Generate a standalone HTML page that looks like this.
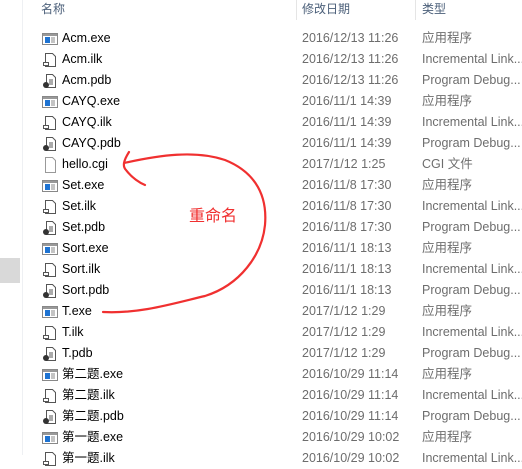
<!DOCTYPE html>
<html><head><meta charset="utf-8"><style>
body{margin:0;width:522px;height:455px;overflow:hidden;background:#fff;font-family:"Liberation Sans","Noto Sans CJK SC",sans-serif;position:relative}
.l{position:absolute;left:22px;top:0;width:1px;height:455px;background:#eef0f3}
.g{position:absolute;left:0;top:258px;width:20px;height:25px;background:#d9d9d9}
.h{position:absolute;top:0;font-size:12px;color:#4c607a}
.sep{position:absolute;top:0;width:1px;height:20px;background:#e5e5e5}
.r{position:absolute;left:0;width:522px;height:21px;font-size:12.5px;line-height:21px;color:#000}
.n{position:absolute;left:62px}
.d{position:absolute;left:302px;color:#6d6d6d}
.t{position:absolute;left:422px;color:#6d6d6d;white-space:nowrap}
.ic{position:absolute;left:42px;top:3px}
</style></head><body>
<div class="l"></div><div class="g"></div>
<div class="h" style="left:41px">名称</div>
<div class="sep" style="left:296px"></div>
<div class="h" style="left:302px">修改日期</div>
<div class="sep" style="left:415px"></div>
<div class="h" style="left:422px">类型</div>
<svg width="0" height="0" style="position:absolute"><defs>
<g id="exe"><rect x="0.5" y="2.5" width="15" height="11" fill="#fff" stroke="#888"/><rect x="1" y="3" width="14" height="2" fill="#999"/><rect x="3" y="6" width="5" height="6" fill="#1e73d2"/><path d="M9 7h4M9 9h4M9 11h4" stroke="#888"/></g>
<g id="ilk"><path d="M3.5 1.5h7l3 3v10h-10z" fill="#fff" stroke="#555"/><rect x="1.5" y="10.5" width="5" height="3" fill="#fff" stroke="#555"/></g>
<g id="pdb"><path d="M4.5 1.5h6l3 3v10h-9z" fill="#fff" stroke="#555"/><path d="M7 7h4M7 9h4M7 11h4" stroke="#555"/><circle cx="4" cy="12" r="3" fill="#333"/></g>
<g id="cgi"><path d="M3.5 0.5h7l3 3v12h-10z" fill="#fff" stroke="#999"/></g>
</defs></svg>
<div class="r" style="top:28px"><svg class="ic" width="16" height="16"><use href="#exe"/></svg><span class="n">Acm.exe</span><span class="d">2016/12/13 11:26</span><span class="t">应用程序</span></div>
<div class="r" style="top:49px"><svg class="ic" width="16" height="16"><use href="#ilk"/></svg><span class="n">Acm.ilk</span><span class="d">2016/12/13 11:26</span><span class="t">Incremental Link...</span></div>
<div class="r" style="top:70px"><svg class="ic" width="16" height="16"><use href="#pdb"/></svg><span class="n">Acm.pdb</span><span class="d">2016/12/13 11:26</span><span class="t">Program Debug...</span></div>
<div class="r" style="top:91px"><svg class="ic" width="16" height="16"><use href="#exe"/></svg><span class="n">CAYQ.exe</span><span class="d">2016/11/1 14:39</span><span class="t">应用程序</span></div>
<div class="r" style="top:112px"><svg class="ic" width="16" height="16"><use href="#ilk"/></svg><span class="n">CAYQ.ilk</span><span class="d">2016/11/1 14:39</span><span class="t">Incremental Link...</span></div>
<div class="r" style="top:133px"><svg class="ic" width="16" height="16"><use href="#pdb"/></svg><span class="n">CAYQ.pdb</span><span class="d">2016/11/1 14:39</span><span class="t">Program Debug...</span></div>
<div class="r" style="top:154px"><svg class="ic" width="16" height="16"><use href="#cgi"/></svg><span class="n">hello.cgi</span><span class="d">2017/1/12 1:25</span><span class="t">CGI 文件</span></div>
<div class="r" style="top:175px"><svg class="ic" width="16" height="16"><use href="#exe"/></svg><span class="n">Set.exe</span><span class="d">2016/11/8 17:30</span><span class="t">应用程序</span></div>
<div class="r" style="top:196px"><svg class="ic" width="16" height="16"><use href="#ilk"/></svg><span class="n">Set.ilk</span><span class="d">2016/11/8 17:30</span><span class="t">Incremental Link...</span></div>
<div class="r" style="top:217px"><svg class="ic" width="16" height="16"><use href="#pdb"/></svg><span class="n">Set.pdb</span><span class="d">2016/11/8 17:30</span><span class="t">Program Debug...</span></div>
<div class="r" style="top:238px"><svg class="ic" width="16" height="16"><use href="#exe"/></svg><span class="n">Sort.exe</span><span class="d">2016/11/1 18:13</span><span class="t">应用程序</span></div>
<div class="r" style="top:259px"><svg class="ic" width="16" height="16"><use href="#ilk"/></svg><span class="n">Sort.ilk</span><span class="d">2016/11/1 18:13</span><span class="t">Incremental Link...</span></div>
<div class="r" style="top:280px"><svg class="ic" width="16" height="16"><use href="#pdb"/></svg><span class="n">Sort.pdb</span><span class="d">2016/11/1 18:13</span><span class="t">Program Debug...</span></div>
<div class="r" style="top:301px"><svg class="ic" width="16" height="16"><use href="#exe"/></svg><span class="n">T.exe</span><span class="d">2017/1/12 1:29</span><span class="t">应用程序</span></div>
<div class="r" style="top:322px"><svg class="ic" width="16" height="16"><use href="#ilk"/></svg><span class="n">T.ilk</span><span class="d">2017/1/12 1:29</span><span class="t">Incremental Link...</span></div>
<div class="r" style="top:343px"><svg class="ic" width="16" height="16"><use href="#pdb"/></svg><span class="n">T.pdb</span><span class="d">2017/1/12 1:29</span><span class="t">Program Debug...</span></div>
<div class="r" style="top:364px"><svg class="ic" width="16" height="16"><use href="#exe"/></svg><span class="n">第二题.exe</span><span class="d">2016/10/29 11:14</span><span class="t">应用程序</span></div>
<div class="r" style="top:385px"><svg class="ic" width="16" height="16"><use href="#ilk"/></svg><span class="n">第二题.ilk</span><span class="d">2016/10/29 11:14</span><span class="t">Incremental Link...</span></div>
<div class="r" style="top:406px"><svg class="ic" width="16" height="16"><use href="#pdb"/></svg><span class="n">第二题.pdb</span><span class="d">2016/10/29 11:14</span><span class="t">Program Debug...</span></div>
<div class="r" style="top:427px"><svg class="ic" width="16" height="16"><use href="#exe"/></svg><span class="n">第一题.exe</span><span class="d">2016/10/29 10:02</span><span class="t">应用程序</span></div>
<div class="r" style="top:448px"><svg class="ic" width="16" height="16"><use href="#ilk"/></svg><span class="n">第一题.ilk</span><span class="d">2016/10/29 10:02</span><span class="t">Incremental Link...</span></div>
<svg style="position:absolute;left:0;top:0" width="522" height="455">
<path d="M103 312 C140 314 175 303 205 296 C240 285 262 255 265 225 C268 190 250 170 225 160 C195 150 160 155 124 163 M129 152 C124 160 122 166 126 170 C132 178 140 183 145 185" fill="none" stroke="#f03030" stroke-width="2.2" stroke-linecap="round"/>
<text x="189" y="221" font-size="16" fill="#f03030" font-family="Noto Sans CJK SC,sans-serif">重命名</text>
</svg>
</body></html>
